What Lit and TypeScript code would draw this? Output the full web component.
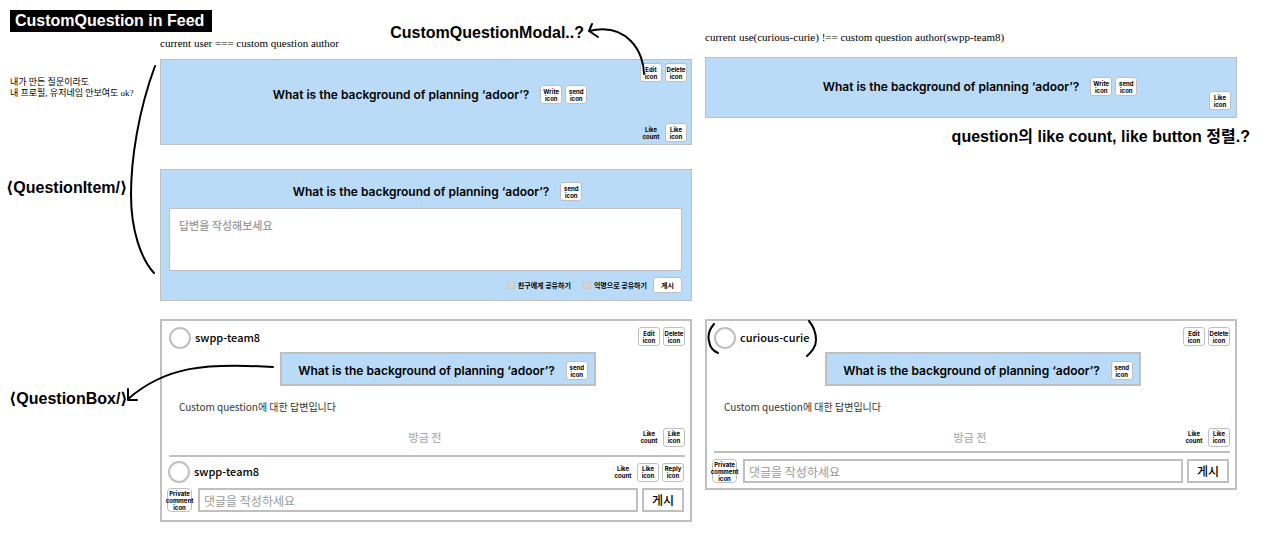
import { LitElement, html, css, svg } from "lit";
import { customElement } from "lit/decorators.js";

const QUESTION = "What is the background of planning ‘adoor’?";

@customElement("app-root")
export class AppRoot extends LitElement {
  static styles = css`
    :host {
      display: block;
      background: #fff;
      color: #000;
      font-family: "Noto Sans CJK KR", sans-serif;
      --line: #bfbfbf;
      --sky: #badbf8;
    }
    * {
      box-sizing: border-box;
    }
    h1, h2, p {
      margin: 0;
    }
    .page {
      display: grid;
      grid-template-columns: 141px minmax(0, 1fr) minmax(0, 1fr);
      column-gap: 13px;
      padding: 10px 43px 23px 6px;
    }
    .head {
      grid-column: 1 / -1;
      display: grid;
      grid-template-columns: subgrid;
      grid-template-rows: 22px 25px;
    }
    .title {
      grid-area: 1 / 1 / 2 / 3;
      justify-self: start;
      margin-left: 4px;
      padding: 0 8px 0 5px;
      background: #000;
      color: #fff;
    }
    .title, .label {
      font: 700 16px/22px "Liberation Sans", "Noto Sans CJK KR", sans-serif;
      white-space: nowrap;
    }
    .side .label {
      font-family: "Liberation Sans", "DejaVu Sans", sans-serif;
    }
    .modal-label {
      grid-area: 1 / 2 / 3 / 3;
      justify-self: end;
      margin: 12px 108px 0 0;
    }
    .caption {
      grid-row: 2;
      grid-column: 2;
      align-self: start;
      margin-top: 6px;
    }
    .caption, .note {
      font: 400 11px/11px "Liberation Serif", "Noto Sans CJK KR", serif;
      white-space: nowrap;
    }
    .caption.other {
      grid-column: 3;
      margin-top: 0;
    }
    .side {
      position: relative;
      padding-top: 20px;
    }
    .note {
      padding-left: 4px;
      font-size: 9px;
    }
    .side .label {
      margin-top: 78px;
    }
    .side .label.second {
      margin: 189px 0 0 3px;
    }
    svg {
      fill: none;
      stroke: #000;
      stroke-width: 2;
      stroke-linecap: round;
      stroke-linejoin: round;
      overflow: visible;
      pointer-events: none;
      position: absolute;
    }
    .bracket {
      left: 124px;
      top: 9px;
    }
    .box-arrow {
      left: 121px;
      top: 307px;
      z-index: 1;
    }
    .modal-arrow {
      right: 46px;
      top: -36px;
    }
    .parens {
      left: -7px;
      top: -8px;
    }
    .column {
      display: flex;
      flex-direction: column;
    }
    .column.mine {
      padding-top: 2px;
    }
    .card {
      position: relative;
      border: 2px solid var(--line);
      display: flex;
      flex-direction: column;
    }
    .card.blue {
      background: var(--sky);
      border-width: 1px;
    }
    .item {
      padding: 3px 4px 2px;
    }
    .item.plain {
      padding: 19px 5px 7px;
    }
    .row {
      display: flex;
      align-items: center;
      gap: 3px;
    }
    .end {
      justify-content: flex-end;
    }
    .center {
      justify-content: center;
    }
    .item .ask {
      margin: 3px 0 19px;
      padding-left: 8px;
    }
    .item.plain .ask {
      margin: 0 0 -5px;
      padding-left: 18px;
    }
    .question {
      font: 600 12px/19px Inter, sans-serif;
      white-space: nowrap;
      margin-right: 8px;
    }
    button {
      font-family: inherit;
      color: #000;
      background: #fff;
      border: 1px solid var(--line);
      padding: 0;
      margin: 0;
    }
    .icon, .count {
      width: 22px;
      font: 700 6px/7px Inter, sans-serif;
      text-align: center;
      display: flex;
      align-items: center;
      justify-content: center;
    }
    .icon {
      height: 19px;
      border-radius: 3px;
      flex: none;
    }
    .icon.private {
      width: 25px;
      height: 24px;
      margin-left: -2px;
      border-radius: 4px;
    }
    .editor {
      margin-top: 24px;
      padding: 12px 9px 7px 8px;
    }
    .editor .ask {
      padding-left: 24px;
    }
    .editor textarea {
      display: block;
      width: 100%;
      height: 63px;
      margin: 7px 0 6px;
      padding: 8px 9px;
      border: 1px solid var(--line);
      border-radius: 0;
      resize: none;
      outline: none;
      font: 500 11px/16px "Noto Sans CJK KR", sans-serif;
    }
    ::placeholder {
      color: #999;
      opacity: 1;
    }
    .share {
      display: flex;
      align-items: center;
      gap: 3px;
      margin-right: 9px;
      font: 700 7px/16px "Noto Sans CJK KR", sans-serif;
    }
    .share.last {
      margin-right: 3px;
    }
    .share input {
      appearance: none;
      width: 8px;
      height: 8px;
      margin: 0;
      background: #d3d3d3;
      border: 1px solid #c9c9c9;
    }
    .submit {
      width: 29px;
      height: 16px;
      border-radius: 2px;
      font: 700 7px/12px "Noto Sans CJK KR", sans-serif;
    }
    .post {
      margin-top: 18px;
      padding: 6px 5px 8px 7px;
    }
    .user {
      position: relative;
      flex: 1;
      display: flex;
      gap: 4px;
      font: 500 11px/20px "Noto Sans CJK KR", sans-serif;
    }
    .avatar {
      width: 22px;
      height: 22px;
      border: 2px solid var(--line);
      border-radius: 50%;
    }
    .post-head {
      align-items: flex-start;
    }
    .quote {
      align-self: center;
      margin-top: 3px;
      padding: 7px 6px 4px 16px;
      background: var(--sky);
      border: 2px solid var(--line);
      margin-left: 22px;
    }
    .answer {
      margin: 13px 0 11px 10px;
      color: #333;
      font: 400 10px/16px "Noto Sans CJK KR", sans-serif;
    }
    .meta {
      display: grid;
      grid-template-columns: 1fr auto 1fr;
      padding-right: 4px;
    }
    .meta .row {
      margin-right: -4px;
    }
    .time {
      grid-column: 2;
      color: #b0b0b0;
      font: 500 11px/22px "Noto Sans CJK KR", sans-serif;
    }
    .rule {
      width: 100%;
      margin: 7px 0 4px;
      border: 0;
      border-top: 2px solid var(--line);
    }
    .other .rule {
      margin: 3px 0 6px;
    }
    .comment {
      margin: 0 1px 5px -1px;
    }
    .write {
      gap: 6px;
      margin-right: 1px;
    }
    .write input {
      flex: 1;
      min-width: 0;
      height: 24px;
      padding: 0 4px;
      border: 2px solid var(--line);
      border-radius: 0;
      outline: none;
      font: 400 12px/18px "Noto Sans CJK KR", sans-serif;
    }
    .send {
      width: 42px;
      height: 24px;
      margin-left: -2px;
      border-width: 2px;
      font: 500 12px/18px "Noto Sans CJK KR", sans-serif;
    }
    .align-label {
      align-self: flex-end;
      margin: 8px -13px 171px 0;
    }
    .other.post {
      margin-top: 0;
      padding-bottom: 5px;
    }
  `;

  private icon(name: string, kind = "") {
    return html`<button class="icon ${kind}" type="button">
      <span>${name.split(" ").map((w, i) => (i ? html`<br />${w}` : w))}</span>
    </button>`;
  }

  private count() {
    return html`<span class="count">Like<br />count</span>`;
  }

  private ask(icons: string[]) {
    return html`<div class="row center ask">
      <span class="question">${QUESTION}</span>${icons.map((i) => this.icon(i))}
    </div>`;
  }

  private post(name: string, other: boolean) {
    return html`<article class="card post ${other ? "other" : ""}">
      <div class="row post-head">
        <div class="user">
          <span class="avatar"></span><span>${name}</span>
          ${other
            ? html`<svg class="parens" width="110" height="40" viewBox="707 319 110 40">
                ${svg`<path d="M714 324C708 331 708 337 709 341C710 348 713 351 718 353M809 321C814 327 816 333 816 340C816 347 812 351 807 356" />`}
              </svg>`
            : ""}
        </div>
        ${this.icon("Edit icon")}${this.icon("Delete icon")}
      </div>
      <div class="quote">${this.ask(["send icon"])}</div>
      <p class="answer">Custom question에 대한 답변입니다</p>
      <div class="meta">
        <span class="time">방금 전</span>
        <div class="row end">${this.count()}${this.icon("Like icon")}</div>
      </div>
      <hr class="rule" />
      ${other
        ? ""
        : html`<div class="row comment">
            <div class="user"><span class="avatar"></span><span>swpp-team8</span></div>
            ${this.count()}${this.icon("Like icon")}${this.icon("Reply icon")}
          </div>`}
      <div class="row write">
        ${this.icon("Private comment icon", "private")}
        <input type="text" placeholder="댓글을 작성하세요" aria-label="댓글" />
        <button class="send" type="button">게시</button>
      </div>
    </article>`;
  }

  render() {
    return html`<main class="page">
      <header class="head">
        <h1 class="title">CustomQuestion in Feed</h1>
        <h2 class="label modal-label">CustomQuestionModal..?</h2>
        <p class="caption">current user === custom question author</p>
        <p class="caption other">
          current use(curious-curie) !== custom question author(swpp-team8)
        </p>
      </header>

      <aside class="side">
        <p class="note">내가 만든 질문이라도<br />내 프로필, 유저네임 안보여도 ok?</p>
        <h2 class="label">⟨QuestionItem/⟩</h2>
        <h2 class="label second">⟨QuestionBox/⟩</h2>
        <svg class="bracket" width="26" height="208" viewBox="130 66 26 208">
          <path d="M155 66C138 112 131 160 131 195C131 230 141 259 154 273" />
        </svg>
        <svg class="box-arrow" width="147" height="38" viewBox="127 364 147 38">
          <path d="M273 367C205 363 166 366 128 399M128 389V400H137" />
        </svg>
      </aside>

      <section class="column mine">
        <article class="card blue item">
          <div class="row end">${this.icon("Edit icon")}${this.icon("Delete icon")}</div>
          ${this.ask(["Write icon", "send icon"])}
          <div class="row end">${this.count()}${this.icon("Like icon")}</div>
          <svg class="modal-arrow" width="57" height="51" viewBox="588 24 57 51">
            <path d="M644 74C644 53 628 22 589 31M592 24L589 31L598 37" />
          </svg>
        </article>

        <article class="card blue editor">
          ${this.ask(["send icon"])}
          <textarea placeholder="답변을 작성해보세요" aria-label="답변"></textarea>
          <div class="row end">
            <label class="share"><input type="checkbox" />친구에게 공유하기</label>
            <label class="share last"><input type="checkbox" />익명으로 공유하기</label>
            <button class="submit" type="button">게시</button>
          </div>
        </article>

        ${this.post("swpp-team8", false)}
      </section>

      <section class="column">
        <article class="card blue item plain">
          ${this.ask(["Write icon", "send icon"])}
          <div class="row end">${this.icon("Like icon")}</div>
        </article>
        <h2 class="label align-label">question의 like count, like button 정렬.?</h2>
        ${this.post("curious-curie", true)}
      </section>
    </main>`;
  }
}
